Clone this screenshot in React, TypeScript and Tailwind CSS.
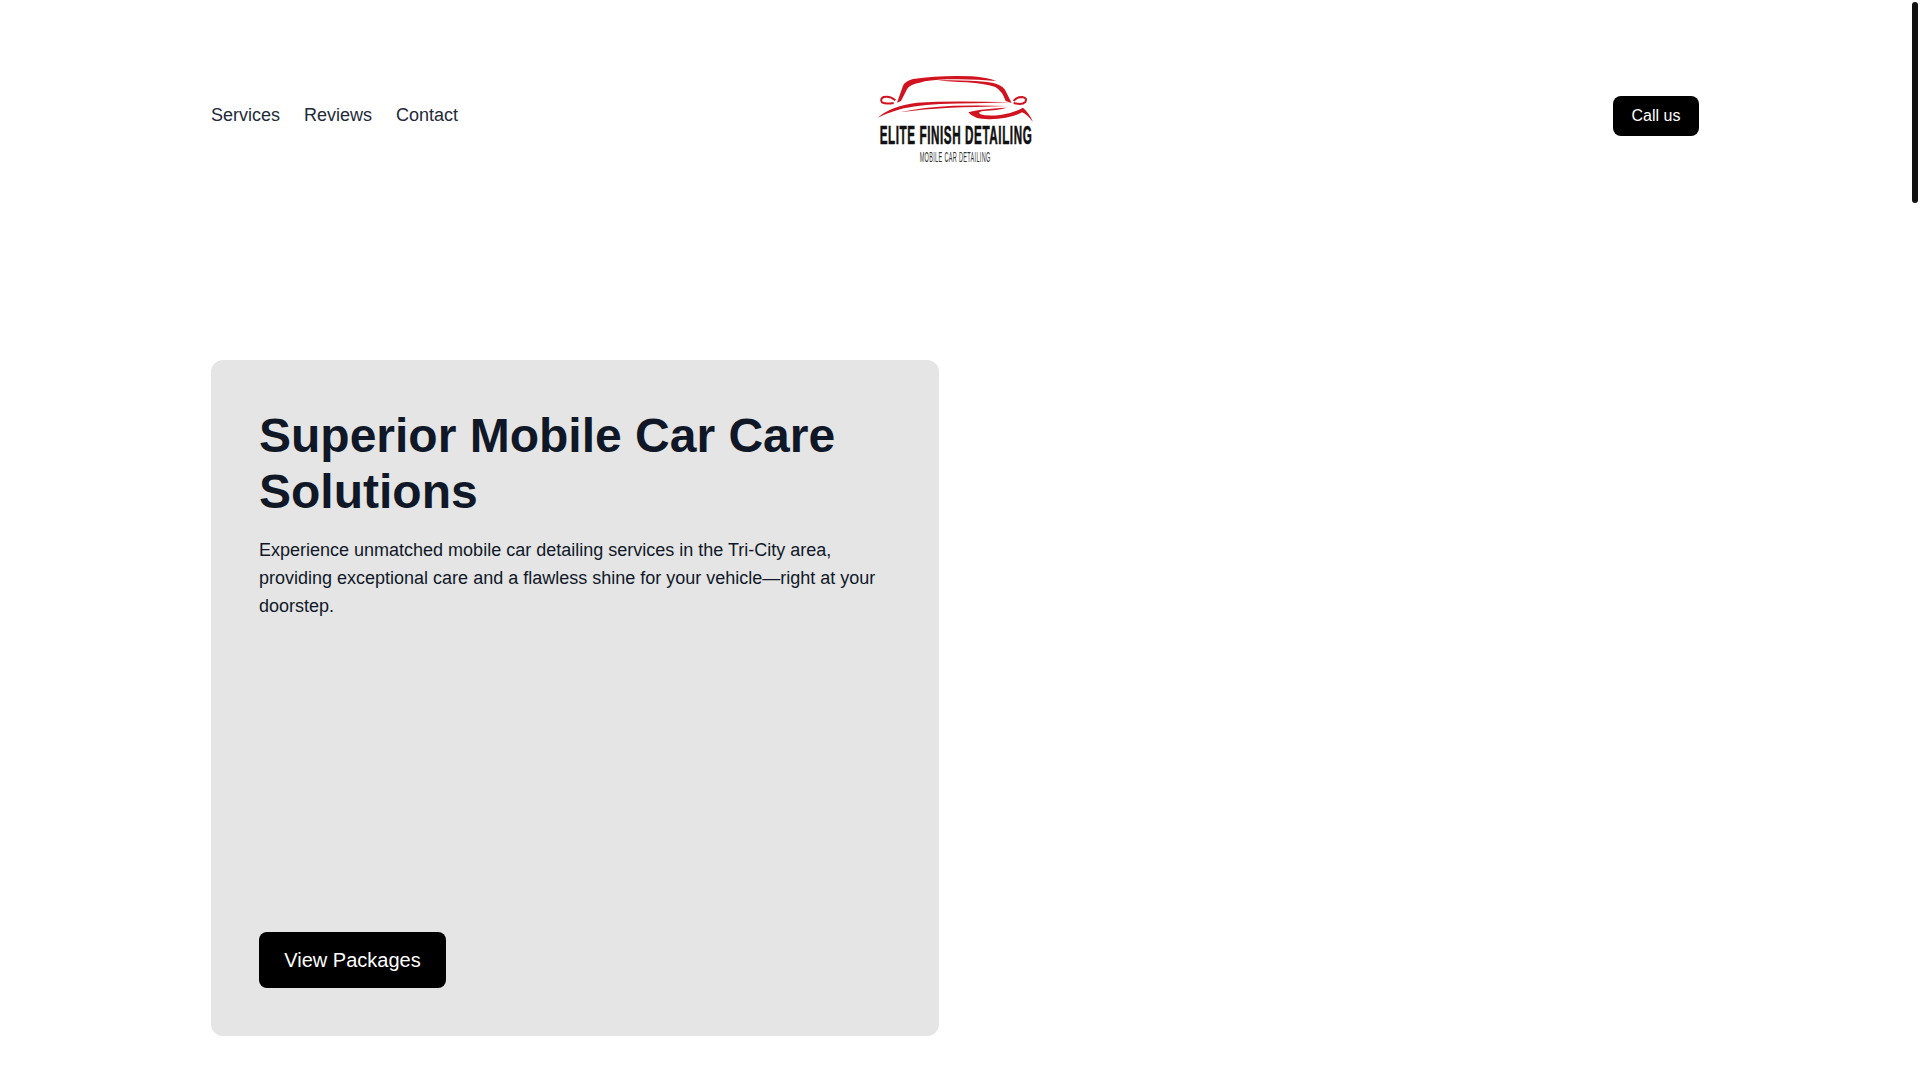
const font = "[font-family:'Liberation_Sans',Arial,sans-serif]";

function Logo() {
  return (
    <svg className="h-[98.67px] w-[166.67px]" viewBox="95 50 500 296">
      <g fill="#d1121f">
        <path d="M170 157 L188 106 Q194 92 218 86 Q300 74 395 78 Q440 82 468 92 Q400 85 320 87 Q265 89 238 97 Q208 102 200 117 L182 152 Z" />
        <path d="M292 90 Q380 88 440 95 Q482 100 494 118 L514 158 L496 152 Q486 122 465 110 Q430 99 380 96 Q330 94 292 90 Z" />
        <path d="M112 202 Q150 168 230 157 Q330 150 514 156 Q400 159 300 161 Q210 166 165 181 Q135 190 112 202 Z" />
        <path d="M178 186 Q250 170 340 166 Q430 164 500 167 Q400 170 330 172 Q250 176 178 186 Z" />
        <path d="M384 186 Q420 175 500 172 Q470 180 430 182 Q410 184 420 192 Q440 198 480 194 Q520 188 548 172 Q568 190 578 215 Q560 192 545 186 Q510 205 450 207 Q400 208 384 186 Z" />
      </g>
      <g fill="none" stroke="#d1121f" strokeWidth={6}>
        <path d="M165 150 Q150 136 130 140 Q118 146 125 156 Q135 162 160 158" />
        <path d="M520 158 Q545 165 555 155 Q562 142 545 140 Q528 140 520 152" />
      </g>
      <text transform="translate(118 280) scale(0.46 1)" fontSize={76} fontWeight={700} letterSpacing={3.9} fill="#111111" stroke="#111111" strokeWidth={2}>
        ELITE FINISH DETAILING
      </text>
      <text transform="translate(238 335) scale(0.36 1)" fontSize={46} letterSpacing={2.8} fill="#333333">
        MOBILE CAR DETAILING
      </text>
    </svg>
  );
}

export default function App() {
  return (
    <div className={`${font} relative min-h-screen bg-white pr-[10px]`}>
      <div className="mx-auto min-h-screen w-[1488px]">
        <header className="grid h-[232px] grid-cols-3 items-center">
          <nav className="flex -translate-y-px gap-6 text-lg text-gray-800">
            <a href="#services">Services</a>
            <a href="#reviews">Reviews</a>
            <a href="#contact">Contact</a>
          </nav>
          <div className="flex justify-center">
            <Logo />
          </div>
          <div className="flex justify-end">
            <button className="h-10 w-[86px] rounded-lg bg-black text-base text-white">Call us</button>
          </div>
        </header>

        <main className="mt-32">
          <section className="flex h-[676px] w-[728px] flex-col justify-between rounded-xl bg-[#e5e5e5] p-12">
            <div>
              <h1 className="text-5xl leading-14 font-bold text-gray-900">Superior Mobile Car Care Solutions</h1>
              <p className="mt-4 text-lg leading-7 text-gray-900">
                Experience unmatched mobile car detailing services in the Tri-City area, providing exceptional care and a flawless shine for your vehicle—right at your doorstep.
              </p>
            </div>
            <div>
              <button className="h-14 w-[187px] rounded-lg bg-black text-xl text-white">View Packages</button>
            </div>
          </section>
        </main>
      </div>
      {/* scrollbar thumb */}
      <div className="absolute top-[2px] right-[2px] h-[201px] w-[6px] rounded-full bg-[#111111]" />
    </div>
  );
}
